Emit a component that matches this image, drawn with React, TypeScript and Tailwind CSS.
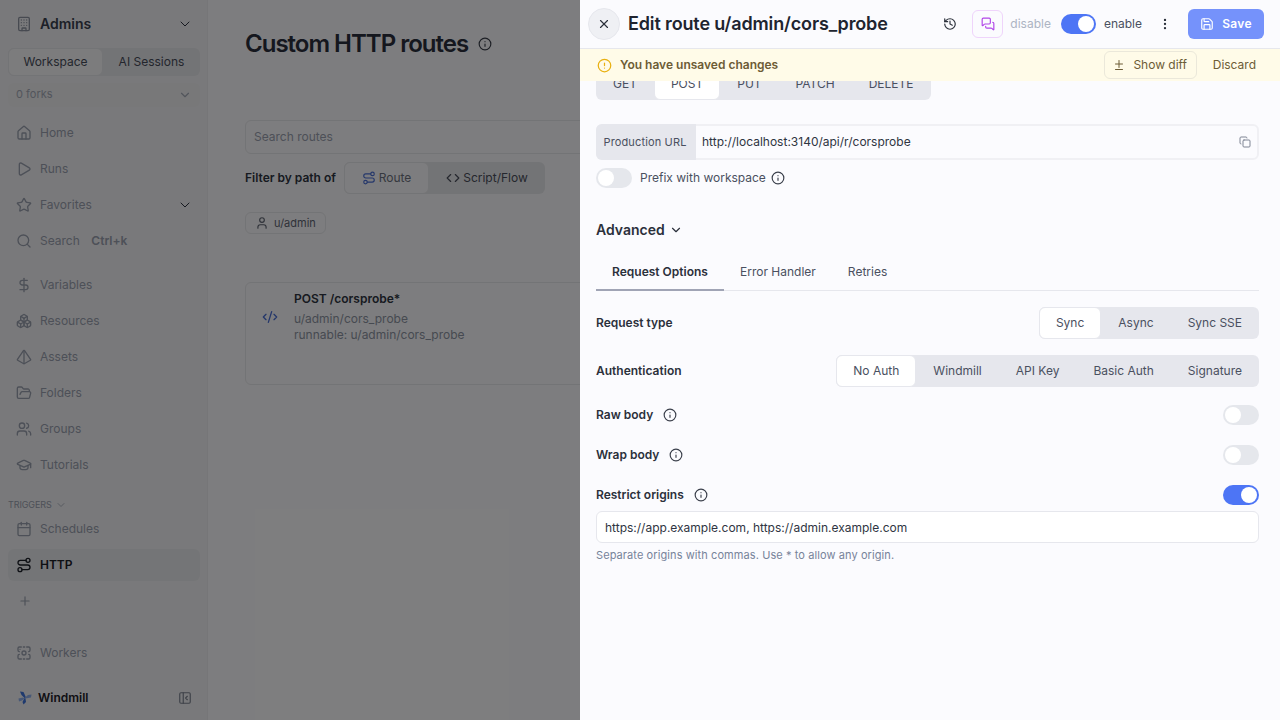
import {
  AlertCircle,
  Boxes,
  Building,
  Calendar,
  ChevronDown,
  Code,
  CodeXml,
  Copy,
  Diff,
  DollarSign,
  FolderOpen,
  GraduationCap,
  History,
  Home,
  Info,
  MessagesSquare,
  MoreVertical,
  PanelLeftClose,
  Play,
  Plus,
  Pyramid,
  Route,
  Save,
  Search,
  Star,
  User,
  Users,
  X,
} from 'lucide-react';
import type { ReactNode } from 'react';

function WorkerIcon({ className }: { className?: string }) {
  return (
    <svg viewBox="0 0 24 24" fill="none" stroke="currentColor" strokeWidth="2" strokeLinecap="round" strokeLinejoin="round" className={className}>
      <path d="M8 3H5a2 2 0 0 0-2 2v3a2 2 0 0 0 2 2" />
      <path d="M16 3h3a2 2 0 0 1 2 2v3a2 2 0 0 1-2 2" />
      <path d="M8 21H5a2 2 0 0 1-2-2v-3a2 2 0 0 1 2-2" />
      <path d="M16 21h3a2 2 0 0 0 2-2v-3a2 2 0 0 0-2-2" />
      <path d="M11 3h2M11 21h2M6 6.5h.01" />
      <circle cx="12" cy="12" r="3" />
    </svg>
  );
}

function WindmillLogo() {
  return (
    <svg viewBox="0 0 14 14" className="w-[14px] h-[14px] shrink-0">
      <path d="M2 0.5 5.5 1 8 6.5 7 7.5 3.5 4Z" fill="#3f74dc" />
      <path d="M13.5 3.5 13 6.5 7.5 7.5 7 6.5 10 4Z" fill="#8fb0ee" />
      <path d="M5.5 13.5 4.5 11 6.5 7 7.5 7.5 8 11Z" fill="#3f74dc" />
      <path d="M0.5 7.5 1 10.5 4 9.5 6.5 7.5 5 6.5Z" fill="#8fb0ee" />
    </svg>
  );
}

function NavItem({ icon, label, extra, chevron, active }: { icon: ReactNode; label: string; extra?: string; chevron?: boolean; active?: boolean }) {
  return (
    <div className={`h-8 flex items-center px-2 rounded-md text-xs ${active ? 'bg-[#e9ebef] text-[#1c2029] font-semibold' : 'text-[#9aa1b0]'}`}>
      <span className="w-6 flex shrink-0">{icon}</span>
      <span>{label}</span>
      {extra && <span className="ml-[11.5px] font-semibold">{extra}</span>}
      {chevron && <ChevronDown strokeWidth={1.5} className="w-4 h-4 ml-auto -mr-px text-[#2f3542]" />}
    </div>
  );
}

function Sidebar() {
  const ic = 'w-4 h-4';
  return (
    <aside className="w-[208px] shrink-0 h-full flex flex-col bg-[#f3f3f6] border-r border-[#ececf0] pl-2 pr-[7px]">
      <div className="h-12 flex items-center pl-2 pr-[7px] text-[#3a4150]">
        <Building className="w-4 h-4 mr-2 text-[#8f95a3]" />
        <span className="text-sm font-semibold">Admins</span>
        <ChevronDown strokeWidth={1.5} className="w-4 h-4 ml-auto text-[#2f3542]" />
      </div>
      <div className="h-[28px] flex rounded-md bg-[#e7e8ec] text-xs text-[#474d5b]">
        <div className="w-[95px] flex items-center justify-center rounded-md bg-[#f8f8fa] border border-[#e7e8ec]">Workspace</div>
        <div className="flex-1 flex items-center justify-center">AI Sessions</div>
      </div>
      <div className="mt-[7px] h-6 flex items-center px-2 pb-px rounded-md bg-[#f0f0f3] text-[11px] text-[#a5abb8]">
        <span>0 forks</span>
        <ChevronDown className="w-3.5 h-3.5 ml-auto text-[#a5abb8]" />
      </div>
      <div className="mt-[10px] flex flex-col gap-1">
        <NavItem icon={<Home className={ic} />} label="Home" />
        <NavItem icon={<Play className={ic} />} label="Runs" />
        <NavItem icon={<Star className={ic} />} label="Favorites" chevron />
        <NavItem icon={<Search className={ic} />} label="Search" extra="Ctrl+k" />
      </div>
      <div className="mt-3 flex flex-col gap-1">
        <NavItem icon={<DollarSign className={ic} />} label="Variables" />
        <NavItem icon={<Boxes className={ic} />} label="Resources" />
        <NavItem icon={<Pyramid className={ic} />} label="Assets" />
        <NavItem icon={<FolderOpen className={ic} />} label="Folders" />
        <NavItem icon={<Users className={ic} />} label="Groups" />
        <NavItem icon={<GraduationCap className={ic} />} label="Tutorials" />
      </div>
      <div className="mt-[17px] h-[14px] flex items-center text-[9px] tracking-[-0.1px] text-[#9aa1b0]">
        <span>TRIGGERS</span>
        <ChevronDown strokeWidth={1.5} className="w-3 h-3 ml-[3px]" />
      </div>
      <div className="mt-[1px] flex flex-col gap-1">
        <NavItem icon={<Calendar className={ic} />} label="Schedules" />
        <NavItem icon={<Route className={ic} />} label="HTTP" active />
        <div className="h-8 flex items-center px-2 text-[#9aa1b0]">
          <Plus className="w-3.5 h-3.5 ml-0.5" />
        </div>
      </div>
      <div className="mt-5">
        <NavItem icon={<WorkerIcon className={ic} />} label="Workers" />
      </div>
      <div className="mt-[17px] h-6 flex items-center pl-[10px] pr-2 text-xs">
        <WindmillLogo />
        <span className="ml-[6px] font-semibold text-[#1c2029]">Windmill</span>
        <PanelLeftClose className="w-3.5 h-3.5 ml-auto text-[#7d8492]" />
      </div>
    </aside>
  );
}

function MainPage() {
  return (
    <main className="flex-1 min-w-0 h-full px-[37px] pt-[28px] bg-[#fbfbfe]">
      <div className="h-8 flex items-center gap-2.5">
        <h1 className="text-2xl font-semibold tracking-[-1px] text-[#2a2f3c]">Custom HTTP routes</h1>
        <Info className="w-3.5 h-3.5 text-[#3a3f4b]" />
      </div>
      <div className="mt-[60px] h-[34px] flex items-center px-[8px] rounded-md border border-[#e7e8ec] text-xs text-[#9aa1b0]">Search routes</div>
      <div className="mt-2 flex items-center gap-2 h-8 text-xs">
        <span className="font-semibold text-[#2f3542]">Filter by path of</span>
        <div className="flex h-8 rounded-md bg-[#e7e8ec] text-[#6c7280]">
          <div className="w-[85px] flex items-center justify-center gap-[3px] rounded-md bg-[#fbfbfe] border border-[#e7e8ec]">
            <Route className="w-3.5 h-3.5 text-[#4a6fd6]" />
            Route
          </div>
          <div className="w-[116px] flex items-center justify-center gap-[3px] text-[#4a4f5c]">
            <Code className="w-3.5 h-3.5" />
            Script/Flow
          </div>
        </div>
      </div>
      <div className="mt-[18px] w-[81px] h-[22px] flex items-center gap-[5px] pl-[9px] rounded-md border border-[#e7e8ec] text-[11px] text-[#5f6573]">
        <User className="w-3.5 h-3.5" />
        u/admin
      </div>
      <div className="mt-[48px] h-[103px] flex rounded-md border border-[#e7e8ec] text-xs">
        <CodeXml className="ml-4 mt-[26px] w-4 h-4 text-[#4a6fd6]" />
        <div className="ml-4 mt-2 text-[#8d94a3]">
          <div className="font-semibold text-[#2f3542]">POST /corsprobe*</div>
          <div className="mt-1">u/admin/cors_probe</div>
          <div>runnable: u/admin/cors_probe</div>
        </div>
      </div>
    </main>
  );
}

function Toggle({ on, narrow }: { on?: boolean; narrow?: boolean }) {
  return (
    <div className={`${narrow ? 'w-[35px]' : 'w-9'} h-5 rounded-full flex items-center px-0.5 shrink-0 ${on ? 'bg-[#4d75f5] justify-end' : 'bg-[#e5e7ec] justify-start'}`}>
      <div className="w-4 h-4 rounded-full bg-white" />
    </div>
  );
}

function Segmented({ items, active }: { items: string[]; active: string }) {
  return (
    <div className="h-8 flex rounded-md bg-[#e6e7ed] text-xs text-[#4a5060]">
      {items.map((item) => (
        <div
          key={item}
          className={`px-4 flex items-center rounded-md border ${item === active ? 'bg-white border-[#e6e7ed]' : 'border-transparent'}`}
        >
          {item}
        </div>
      ))}
    </div>
  );
}

function LabelRow({ label }: { label: string }) {
  return (
    <div className="flex items-center gap-[10px] text-xs font-semibold text-[#2b303b]">
      {label}
      <Info className="w-3.5 h-3.5 text-[#3a3f4b]" />
    </div>
  );
}

function Drawer() {
  return (
    <section className="absolute top-0 right-0 bottom-0 w-[700px] flex flex-col bg-[#fbfbfe]">
      <header className="h-[49px] shrink-0 flex items-center pl-2 pr-4 border-b border-[#e6e7ed]">
        <button className="w-8 h-8 rounded-full flex items-center justify-center bg-[#eff0f4] border border-[#e6e7ed] text-[#2b303b]">
          <X className="w-3.5 h-3.5" />
        </button>
        <h2 className="ml-2 text-lg font-semibold tracking-[-0.14px] text-[#20242f]">Edit route u/admin/cors_probe</h2>
        <History className="ml-auto w-3.5 h-3.5 text-[#2b303b]" />
        <div className="ml-[15px] w-[31px] h-[28px] flex items-center justify-center rounded-md border border-[#efd4fb]">
          <MessagesSquare className="w-3.5 h-3.5 text-[#b146e8]" />
        </div>
        <span className="ml-[7px] text-xs text-[#adb4c3]">disable</span>
        <div className="ml-[10px]">
          <Toggle on narrow />
        </div>
        <span className="ml-2 text-xs text-[#4a5060]">enable</span>
        <MoreVertical className="ml-4 w-3.5 h-3.5 text-[#2b303b]" />
        <button className="ml-4 w-[76px] h-[30px] flex items-center justify-center gap-2 rounded-md bg-[#7592fb] text-xs font-semibold tracking-[0.3px] text-white">
          <Save className="w-3.5 h-3.5" />
          Save
        </button>
      </header>

      <div className="h-8 shrink-0 z-10 flex items-center pl-[17px] pr-2 bg-[#fffbe8] text-xs text-[#6d5c36]">
        <AlertCircle className="w-[15px] h-[15px] text-[#e9b011]" />
        <span className="ml-2 font-semibold">You have unsaved changes</span>
        <button className="ml-auto w-[93px] h-[28px] flex items-center justify-center gap-2 rounded-md border border-[#ebe8da]">
          <Diff className="w-3 h-3" />
          Show diff
        </button>
        <span className="ml-4 mr-4">Discard</span>
      </div>

      <div className="flex-1 min-h-0 overflow-hidden pl-4 pr-[21px]">
        <div className="-mt-[13px] flex">
          <Segmented items={['GET', 'POST', 'PUT', 'PATCH', 'DELETE']} active="POST" />
        </div>

        <div className="mt-6 h-9 flex rounded-md border-2 border-[#f0f0f4] text-xs">
          <div className="-my-0.5 -ml-0.5 w-[100px] flex items-center justify-center pr-0.5 rounded-l-md bg-[#e6e7ed] text-[11px] tracking-[0.14px] text-[#4a5060]">Production URL</div>
          <div className="flex-1 flex items-center pl-[6px] pr-1.5 text-[#2f3542]">
            http://localhost:3140/api/r/corsprobe
            <Copy className="ml-auto w-3 h-3 text-[#7f8594]" />
          </div>
        </div>
        <div className="mt-2 flex items-center text-xs text-[#4a5060]">
          <Toggle />
          <span className="ml-2">Prefix with workspace</span>
          <Info className="ml-[5px] w-3.5 h-3.5 text-[#3a3f4b]" />
        </div>

        <div className="mt-[30px] h-6 flex items-center gap-1 text-sm font-semibold text-[#2b303b]">
          Advanced
          <ChevronDown className="w-3.5 h-3.5" />
        </div>

        <div className="mt-3 h-[37px] flex border-b border-[#e6e7ed] text-xs text-[#4a5060]">
          <div className="w-[128px] flex items-center justify-center font-semibold text-[#2b303b] border-b-2 border-[#a0a4b5] -mb-px">Request Options</div>
          <div className="px-4 flex items-center">Error Handler</div>
          <div className="px-4 flex items-center">Retries</div>
        </div>

        <div className="mt-4 flex items-center justify-between text-xs font-semibold text-[#2b303b]">
          Request type
          <div className="font-normal">
            <Segmented items={['Sync', 'Async', 'Sync SSE']} active="Sync" />
          </div>
        </div>
        <div className="mt-4 flex items-center justify-between text-xs font-semibold text-[#2b303b]">
          Authentication
          <div className="font-normal">
            <Segmented items={['No Auth', 'Windmill', 'API Key', 'Basic Auth', 'Signature']} active="No Auth" />
          </div>
        </div>

        <div className="mt-[18px] flex items-center justify-between">
          <LabelRow label="Raw body" />
          <Toggle />
        </div>
        <div className="mt-5 flex items-center justify-between">
          <LabelRow label="Wrap body" />
          <Toggle />
        </div>
        <div className="mt-5 flex items-center justify-between">
          <LabelRow label="Restrict origins" />
          <Toggle on />
        </div>

        <div className="mt-1.5 h-8 flex items-center px-2 pt-px rounded-md border border-[#e6e7ed] bg-white text-xs text-[#2f3542]">
          https://app.example.com, https://admin.example.com
        </div>
        <p className="mt-1 text-[11px] tracking-[0.09px] text-[#77839a]">Separate origins with commas. Use * to allow any origin.</p>
      </div>
    </section>
  );
}

export default function App() {
  return (
    <div className="relative w-full h-screen overflow-hidden flex font-['Inter',sans-serif]">
      <Sidebar />
      <MainPage />
      {/* dimmed backdrop behind the drawer */}
      <div className="absolute inset-0 bg-black/50" />
      <Drawer />
    </div>
  );
}
